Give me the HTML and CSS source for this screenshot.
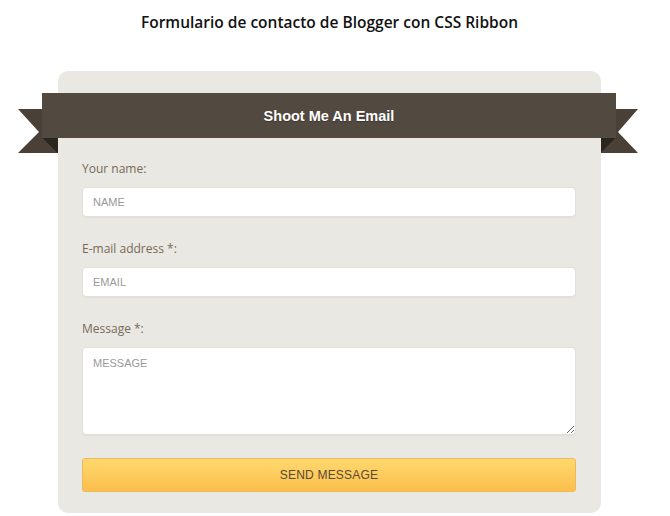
FILE: index.html
```html
<!DOCTYPE html>
<html lang="es">
<head>
    <meta charset="UTF-8">
    <meta name="viewport" content="width=device-width, initial-scale=1.0">
    <title>Formulario de contacto de Blogger con CSS Ribbon</title>
    <link rel="stylesheet" href="styles.css">
</head>
<body>
    <div class="page">
        <h1 class="page-title">Formulario de contacto de Blogger con CSS Ribbon</h1>

        <form class="contact-card" onsubmit="return false;">
            <div class="ribbon">
                <h2>Shoot Me An Email</h2>
            </div>
            <div class="fields">
                <label for="name">Your name:</label>
                <input type="text" id="name" placeholder="NAME">

                <label for="email">E-mail address *:</label>
                <input type="text" id="email" placeholder="EMAIL">

                <label for="message">Message *:</label>
                <textarea id="message" placeholder="MESSAGE"></textarea>

                <button type="submit">SEND MESSAGE</button>
            </div>
        </form>
    </div>
</body>
</html>
```

FILE: styles.css
```css
body {
    margin: 0;
    font-family: "Open Sans", sans-serif;
    background: #fff;
}
.page {
    width: 543px;
    margin-left: 58px;
}
.page-title {
    margin: 0;
    padding-top: 12px;
    font-size: 15.5px;
    font-weight: 600;
    line-height: 20px;
    text-align: center;
    color: #111;
}

.contact-card {
    position: relative;
    z-index: 0;
    margin-top: 39px;
    padding: 22px 0 21px;
    background: #e9e8e2;
    border-radius: 10px;
}

/* ribbon band + folded tails */
.ribbon {
    position: relative;
    height: 45px;
    margin: 0 -15px 0 -16px;
    background: #524940;
    display: flex;
    align-items: center;
    justify-content: center;
}
.ribbon h2 {
    margin: 0;
    font-family: "Liberation Sans", Arial, sans-serif;
    font-size: 14.5px;
    font-weight: bold;
    color: #fff;
    text-shadow: 0 1px 1px rgba(0,0,0,0.3);
}
.ribbon::before,
.ribbon::after {
    content: "";
    position: absolute;
    top: 16px;
    height: 44px;
    z-index: -1;
}
.ribbon::before {
    left: -24px;
    width: 40px;
    background: linear-gradient(to bottom left, #2b2520 50%, transparent 50%) right bottom / 16px 15px no-repeat, #4a4037;
    clip-path: polygon(0 0, 100% 0, 100% 100%, 0 100%, 21px 23px);
}
.ribbon::after {
    right: -22px;
    width: 37px;
    background: linear-gradient(to bottom right, #2b2520 50%, transparent 50%) left bottom / 15px 15px no-repeat, #4a4037;
    clip-path: polygon(0 0, 100% 0, calc(100% - 20px) 23px, 100% 100%, 0 100%);
}

.fields {
    display: flex;
    flex-direction: column;
    padding: 23px 25px 0 24px;
}
.fields label {
    margin-bottom: 10px;
    font-size: 12px;
    font-weight: 500;
    line-height: 16px;
    color: #766a59;
}
.fields input,
.fields textarea {
    box-sizing: border-box;
    margin: 0 0 24px;
    padding: 0 10px;
    border: 1px solid #e2e0d8;
    border-radius: 4px;
    background: #fff;
    box-shadow: 0 1px 1px rgba(0,0,0,0.04);
    font-family: "Liberation Sans", Arial, sans-serif;
    font-size: 11px;
    color: #555;
}
.fields input {
    height: 30px;
}
.fields textarea {
    height: 88px;
    margin-bottom: 23px;
    padding: 7px 10px;
    line-height: 16px;
}
.fields input::placeholder,
.fields textarea::placeholder {
    color: #999;
}
.fields button {
    height: 34px;
    border: 1px solid #eabb58;
    border-radius: 3px;
    background: linear-gradient(#ffd86e, #fbbf4c);
    font-family: "Liberation Sans", Arial, sans-serif;
    font-size: 12px;
    letter-spacing: 0.2px;
    color: #574a38;
    cursor: pointer;
}
```
